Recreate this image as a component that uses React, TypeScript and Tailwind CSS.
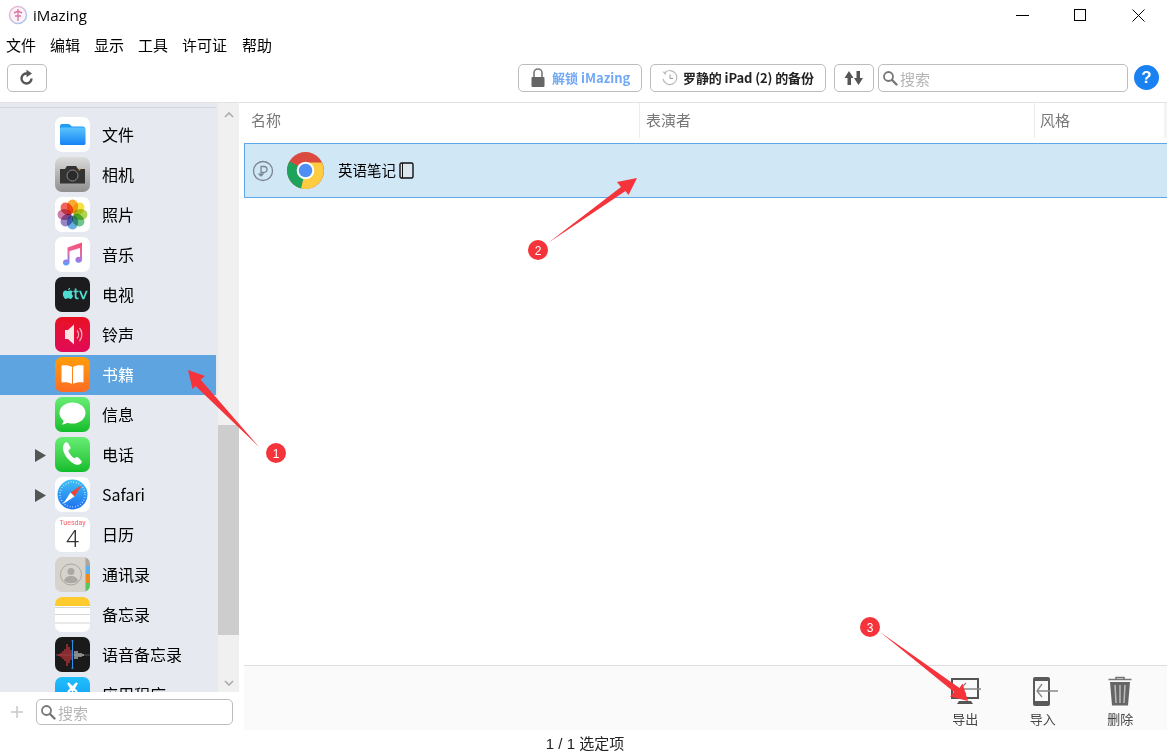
import type { ReactNode } from 'react';

const FONT = "'Noto Sans CJK SC', 'Noto Sans', sans-serif";

function Tile({ children, className = '' }: { children: ReactNode; className?: string }) {
  return <div className={`w-[35px] h-[35px] rounded-[7px] overflow-hidden shrink-0 ${className}`}>{children}</div>;
}

function Svg({ children }: { children: ReactNode }) {
  return (
    <svg width="35" height="35" viewBox="0 0 35 35" className="block">
      {children}
    </svg>
  );
}

const petals = [
  ['#f9a11b', 0], ['#f5de2a', 45], ['#a5cf3d', 90], ['#5fbf7d', 135],
  ['#58a6dc', 180], ['#8f78c0', 225], ['#cc6fa0', 270], ['#f0544c', 315],
] as const;

const icons: Record<string, ReactNode> = {
  files: (
    <Tile className="bg-white">
      <Svg>
        <defs>
          <linearGradient id="fld" x1="0" y1="0" x2="0" y2="1">
            <stop offset="0" stopColor="#5cc4fb" />
            <stop offset="1" stopColor="#1482f5" />
          </linearGradient>
        </defs>
        <path d="M5 9a2 2 0 0 1 2-2h7l3 2.500h11a2 2 0 0 1 2 2V12H5z" fill="#1f9cf3" />
        <rect x="5" y="10.500" width="25.500" height="17.500" rx="1.500" fill="url(#fld)" />
      </Svg>
    </Tile>
  ),
  camera: (
    <Tile className="bg-gradient-to-b from-[#dcdcdc] to-[#8f8f8f]">
      <Svg>
        <path d="M5 12h5l2-3h9l2 3h7v14.500H5z" fill="#333" />
        <circle cx="17.500" cy="18.500" r="5.500" fill="#2a2a2a" stroke="#8d8d8d" strokeWidth="1" />
        <circle cx="24.500" cy="12.500" r="1" fill="#e89a2c" />
      </Svg>
    </Tile>
  ),
  photos: (
    <Tile className="bg-white">
      <Svg>
        {petals.map(([c, a]) => (
          <ellipse key={a} cx="17.500" cy="9.500" rx="5.600" ry="7" fill={c} fillOpacity="0.9" className="mix-blend-multiply" transform={`rotate(${a} 17.500 17.500)`} />
        ))}
      </Svg>
    </Tile>
  ),
  music: (
    <Tile className="bg-white">
      <Svg>
        <defs>
          <linearGradient id="mus" x1="0.5" y1="0" x2="0.4" y2="1">
            <stop offset="0" stopColor="#f9506f" />
            <stop offset="0.45" stopColor="#e66aa8" />
            <stop offset="0.8" stopColor="#8d7df0" />
            <stop offset="1" stopColor="#5ea6f5" />
          </linearGradient>
        </defs>
        <path d="M12.500 10.500 27 5.500v17.200a3.300 3 0 1 1-2-2.700V11l-10.500 3.200v11.300a3.300 3 0 1 1-2-2.700z" fill="url(#mus)" />
      </Svg>
    </Tile>
  ),
  tv: (
    <Tile className="bg-[#1c1c1e]">
      <Svg>
        <path d="M10.500 13.500c1 0 1.500.6 2.600.6 1 0 1.500-.6 2.800-.6.600 0 1.500.3 2 1-1.800 1.100-1.400 3.500.3 4.200-.5 1.300-1.500 3.200-2.700 3.200-.9 0-1.200-.6-2.300-.6s-1.500.6-2.300.6c-1.400 0-3-2.700-3-5 0-2.200 1.400-3.400 2.600-3.400zM13.100 13.300c-.1-1.300 1-2.400 2.100-2.500.1 1.300-1 2.500-2.100 2.500z" fill="#4fdcd0" />
        <path d="M21.500 11.500v2.200h2v1.600h-2v4.300c0 1 .8 1.200 2 1v1.600c-2.300.4-3.800-.3-3.800-2.400v-4.500h-1.200v-1.600h1.200v-2.200zM24 13.700h2l2.400 6.400 2.400-6.400h1.900l-3.400 8.600h-1.900z" fill="#4fdcd0" />
      </Svg>
    </Tile>
  ),
  ring: (
    <Tile className="bg-gradient-to-b from-[#e9101f] to-[#e00a55]">
      <Svg>
        <path d="M10 13h3l6-5.500v20L13 22h-3z" fill="#fbe3e3" />
        <path d="M22 13.500a6 6 0 0 1 0 8M24.500 11a10 10 0 0 1 0 13" fill="none" stroke="#f6b7bd" strokeWidth="1.200" />
      </Svg>
    </Tile>
  ),
  books: (
    <Tile className="bg-gradient-to-b from-[#ff9c05] to-[#fc6c22]">
      <Svg>
        <path d="M17 10c-2.500-1.800-7-2.300-10.500-1.500v17c3.500-.8 8-.2 10.500 1.500zM18 10c2.500-1.800 7-2.300 10.500-1.500v17c-3.500-.8-8-.2-10.500 1.500z" fill="#fff" />
      </Svg>
    </Tile>
  ),
  msg: (
    <Tile className="bg-gradient-to-b from-[#65ee73] to-[#0cbd2a]">
      <Svg>
        <ellipse cx="17.500" cy="16" rx="13" ry="10.500" fill="#fff" />
        <path d="M9 22c0 2.500-1 4.500-2.500 5.500 3 0 5.500-1 7-3z" fill="#fff" />
      </Svg>
    </Tile>
  ),
  phone: (
    <Tile className="bg-gradient-to-b from-[#65ee73] to-[#0cbd2a]">
      <Svg>
        <path d="M10.500 5.500c1-.6 2-.4 2.500.5l2.300 4c.4.800.2 1.600-.5 2.200l-1.500 1.300c.8 2.800 3.200 6 6 7.800l1.800-1.100c.8-.5 1.600-.4 2.200.3l3 3.200c.7.800.6 1.800-.2 2.500-1.600 1.500-3.500 2-5.500 1.300-5.500-2-11-8.500-12.500-14.500-.7-3 .4-6 2.400-7.800z" fill="#fff" />
      </Svg>
    </Tile>
  ),
  safari: (
    <Tile className="bg-white">
      <Svg>
        <defs>
          <linearGradient id="saf" x1="0" y1="0" x2="0" y2="1">
            <stop offset="0" stopColor="#3ec0f5" />
            <stop offset="1" stopColor="#1e6ff0" />
          </linearGradient>
        </defs>
        <circle cx="17.500" cy="17.500" r="15" fill="url(#saf)" />
        <circle cx="17.500" cy="17.500" r="12.500" fill="none" stroke="#d7efff" strokeWidth="1.600" strokeDasharray="0.700 2" />
        <path d="M27 8l-11.500 7.500 4 4z" fill="#f04438" />
        <path d="M8 27l7.500-11.500 4 4z" fill="#fff" />
      </Svg>
    </Tile>
  ),
  cal: (
    <Tile className="bg-white flex flex-col items-center">
      <span className="text-[7px] leading-[9px] mt-[2px] text-[#f4606c]" style={{ fontFamily: 'Roboto' }}>Tuesday</span>
      <span className="text-[24px] leading-[22px] font-light text-[#333]" style={{ fontFamily: 'Roboto' }}>4</span>
    </Tile>
  ),
  contacts: (
    <Tile className="bg-[#d6d3cc]">
      <Svg>
        <rect x="30.500" y="0" width="4.500" height="9" fill="#a9a6a0" />
        <rect x="30.500" y="9" width="4.500" height="8" fill="#5db2ee" />
        <rect x="30.500" y="17" width="4.500" height="9" fill="#f08a1d" />
        <rect x="30.500" y="26" width="4.500" height="9" fill="#5cc65c" />
        <circle cx="16" cy="17.500" r="10.500" fill="none" stroke="#a9a7a1" strokeWidth="1" />
        <circle cx="16" cy="14.500" r="3.500" fill="#aaa8a2" />
        <path d="M9 24c1-4 4-5 7-5s6 1 7 5c-4 3-10 3-14 0z" fill="#aaa8a2" />
      </Svg>
    </Tile>
  ),
  notes: (
    <Tile className="bg-white">
      <Svg>
        <rect width="35" height="9" fill="#fdcb2d" />
        <path d="M0 10.500h35M0 17.500h35M0 26h35" stroke="#d4d4d4" strokeWidth="1" />
      </Svg>
    </Tile>
  ),
  voice: (
    <Tile className="bg-[#1a1a1a]">
      <Svg>
        <path d="M1 18h34" stroke="#666" strokeWidth="0.800" />
        {[4, 6, 8, 10, 12, 14, 16].map((x, i) => (
          <path key={x} d={`M${x} ${18 - [1, 2, 4, 6, 11, 8, 5][i]}v${[1, 2, 4, 6, 11, 8, 5][i] * 2}`} stroke="#c0373c" strokeWidth="1.300" />
        ))}
        {[20, 22, 24, 26, 28].map((x, i) => (
          <path key={x} d={`M${x} ${18 - [4, 4, 2, 2, 1][i]}v${[4, 4, 2, 2, 1][i] * 2}`} stroke="#bdbdbd" strokeWidth="1.300" />
        ))}
        <path d="M17.500 4v27" stroke="#2f8fe8" strokeWidth="1" />
        <circle cx="17.500" cy="4" r="1" fill="#2f8fe8" />
        <circle cx="17.500" cy="31" r="1" fill="#2f8fe8" />
      </Svg>
    </Tile>
  ),
  apps: (
    <Tile className="bg-gradient-to-b from-[#1fc0fb] to-[#1a8cf2]">
      <Svg>
        <path d="M13 6l4.500 7.500L22 6M13 15l9-9M22 15l-9-9" stroke="#fff" strokeWidth="2.200" fill="none" />
      </Svg>
    </Tile>
  ),
};

const items = [
  { key: 'files', label: '文件' },
  { key: 'camera', label: '相机' },
  { key: 'photos', label: '照片' },
  { key: 'music', label: '音乐' },
  { key: 'tv', label: '电视' },
  { key: 'ring', label: '铃声' },
  { key: 'books', label: '书籍', active: true },
  { key: 'msg', label: '信息' },
  { key: 'phone', label: '电话', arrow: true },
  { key: 'safari', label: 'Safari', arrow: true },
  { key: 'cal', label: '日历' },
  { key: 'contacts', label: '通讯录' },
  { key: 'notes', label: '备忘录' },
  { key: 'voice', label: '语音备忘录' },
  { key: 'apps', label: '应用程序' },
];

function SearchGlass({ size = 16 }: { size?: number }) {
  return (
    <svg width={size} height={size} viewBox="0 0 16 16" className="shrink-0">
      <circle cx="6.500" cy="6.500" r="4.500" fill="none" stroke="#777" strokeWidth="1.800" />
      <path d="M10 10l4.500 4.500" stroke="#777" strokeWidth="2.400" strokeLinecap="round" />
    </svg>
  );
}

function ToolButton({ children, className = '' }: { children: ReactNode; className?: string }) {
  return (
    <div className={`h-[28px] rounded-[5px] border border-[#bdbdbd] bg-white flex items-center shrink-0 ${className}`}>
      {children}
    </div>
  );
}

function Badge({ n, x, y }: { n: number; x: number; y: number }) {
  return (
    <g>
      <circle cx={x} cy={y} r="10" fill="#f5333a" />
      <text x={x} y={y + 4.500} textAnchor="middle" fontSize="12" fill="#fff" fontFamily="'Liberation Sans'">{n}</text>
    </g>
  );
}

export default function App() {
  return (
    <div className="w-[1167px] h-[754px] bg-white relative overflow-hidden flex flex-col text-black" style={{ fontFamily: FONT }}>
      {/* title bar */}
      <div className="h-[30px] flex items-center shrink-0">
        <svg width="20" height="20" viewBox="0 0 20 20" className="ml-[8px]">
          <defs>
            <linearGradient id="logo" x1="0" y1="0" x2="1" y2="1">
              <stop offset="0" stopColor="#f6b5c8" />
              <stop offset="1" stopColor="#9fc8f5" />
            </linearGradient>
          </defs>
          <circle cx="10" cy="10" r="8.500" fill="#fdf3f7" stroke="url(#logo)" strokeWidth="1.500" />
          <path d="M10 4v12M6 8l4-2 4 2M7 11h6" stroke="#d77aa8" strokeWidth="1.400" fill="none" />
        </svg>
        <span className="ml-[5px] text-[15px] leading-none" style={{ fontFamily: "'Open Sans', sans-serif" }}>iMazing</span>
        <div className="ml-auto flex">
          <div className="w-[58px] h-[30px] flex items-center justify-center">
            <div className="w-[13px] h-px bg-black" />
          </div>
          <div className="w-[58px] h-[30px] flex items-center justify-center">
            <div className="w-[12px] h-[12px] border border-black" />
          </div>
          <div className="w-[58px] h-[30px] flex items-center justify-center">
            <svg width="13" height="13" viewBox="0 0 13 13">
              <path d="M.5.5l12 12M12.500.5l-12 12" stroke="#000" strokeWidth="1" />
            </svg>
          </div>
        </div>
      </div>

      {/* menu */}
      <div className="h-[28px] flex items-center gap-[14px] pl-[6px] text-[15px] leading-none shrink-0">
        {['文件', '编辑', '显示', '工具', '许可证', '帮助'].map((m) => (
          <span key={m} className="last:ml-px">{m}</span>
        ))}
      </div>

      {/* toolbar */}
      <div className="h-[45px] pt-[6px] flex items-start pl-[7px] pr-[8px] border-b border-[#e2e2e2] shrink-0">
        <ToolButton className="w-[40px] justify-center">
          <svg width="18" height="18" viewBox="0 0 18 18">
            <path d="M13.500 9.500a5 5 0 1 1-4.500-5" fill="none" stroke="#555" strokeWidth="2.400" />
            <path d="M8.500 .8l5.500 3.700-5.500 3.700z" fill="#555" />
          </svg>
        </ToolButton>
        <ToolButton className="w-[124px] ml-auto pl-[11px] gap-[6px]">
          <svg width="16" height="20" viewBox="0 0 16 20">
            <path d="M4 9V5a4 4 0 0 1 8 0v4" fill="none" stroke="#777" strokeWidth="1.600" />
            <rect x="1.500" y="9" width="13" height="10" rx="1" fill="#666" />
          </svg>
          <span className="text-[13px] font-bold text-[#71a9f7] whitespace-nowrap">解锁 iMazing</span>
        </ToolButton>
        <ToolButton className="w-[176px] ml-[8px] pl-[10px] gap-[4px]">
          <svg width="18" height="18" viewBox="0 0 18 18">
            <path d="M3.500 4a7 7 0 1 1-1.500 6" fill="none" stroke="#bbb" strokeWidth="1.200" />
            <path d="M1.500 2.500l3.800.5-1 3.300z" fill="#bbb" />
            <path d="M9 5.500V9.500h3" fill="none" stroke="#999" strokeWidth="1" />
          </svg>
          <span className="text-[13px] font-bold text-[#222] whitespace-nowrap tracking-[-0.1px]">罗静的 iPad (2) 的备份</span>
        </ToolButton>
        <ToolButton className="w-[40px] ml-[8px] justify-center">
          <svg width="20" height="16" viewBox="0 0 20 16">
            <path d="M5 1l4.500 7H7v7H3.500V8H.5zM14.500 15l-4.500-7h2.500V1H16v7h3z" fill="#555" />
          </svg>
        </ToolButton>
        <ToolButton className="w-[250px] ml-[4px] pl-[3px] gap-[2px]">
          <SearchGlass />
          <span className="text-[15px] text-[#b5b5b5] leading-none">搜索</span>
        </ToolButton>
        <div className="w-[25px] h-[25px] ml-[6px] mt-px rounded-full bg-[#1a82f0] text-white text-[17px] font-bold flex items-center justify-center shrink-0" style={{ fontFamily: "'Liberation Sans'" }}>?</div>
      </div>

      <div className="flex-1 min-h-0 flex">
        {/* sidebar */}
        <div className="w-[240px] flex flex-col shrink-0">
          <div className="h-[589px] flex">
            <div className="w-[218px] bg-[#e6e9ef] overflow-hidden pt-[4px]">
              <div className="w-[216px] border-t border-[#d2d5da] mb-[7px]" />
              {items.map((it) => (
                <div key={it.key} className={`w-[216px] h-[40px] flex items-center shrink-0 ${it.active ? 'bg-[#5ea4e0] text-white' : ''}`}>
                  <div className="w-[55px] flex justify-end pr-[9px]">
                    {it.arrow && (
                      <svg width="11" height="13" viewBox="0 0 11 13">
                        <path d="M0 0l11 6.500L0 13z" fill="#555" />
                      </svg>
                    )}
                  </div>
                  <div className="-mt-[1px]">{icons[it.key]}</div>
                  <span className="ml-[12px] -mt-[2px] text-[16px] leading-none whitespace-nowrap">{it.label}</span>
                </div>
              ))}
            </div>
            <div className="w-[21px] bg-[#f0f0f0] flex flex-col items-center">
              <svg width="10" height="6" viewBox="0 0 10 6" className="mt-[9px]">
                <path d="M1 5l4-4 4 4" fill="none" stroke="#aaa" strokeWidth="1.600" />
              </svg>
              <div className="w-full h-[210px] bg-[#cdcdcd] mt-[307px]" />
              <svg width="10" height="6" viewBox="0 0 10 6" className="mt-[45px]">
                <path d="M1 1l4 4 4-4" fill="none" stroke="#aaa" strokeWidth="1.600" />
              </svg>
            </div>
          </div>
          <div className="flex items-center pt-[7px] pl-[10px]">
            <svg width="14" height="14" viewBox="0 0 14 14" className="shrink-0">
              <path d="M7 1v12M1 7h12" stroke="#c8c8c8" strokeWidth="1.500" />
            </svg>
            <div className="w-[197px] h-[26px] ml-[12px] rounded-[5px] border border-[#bdbdbd] flex items-center pl-[3px] gap-[2px]">
              <SearchGlass />
              <span className="text-[15px] text-[#b5b5b5] leading-none">搜索</span>
            </div>
          </div>
        </div>

        {/* main */}
        <div className="flex-1 min-w-0 flex flex-col">
          <div className="h-[35px] flex text-[15px] text-[#777] shrink-0">
            <div className="w-[400px] pl-[11px] flex items-center border-r border-[#ececec]">名称</div>
            <div className="w-[395px] pl-[6px] flex items-center border-r border-[#ececec]">表演者</div>
            <div className="flex-1 pl-[5px] flex items-center border-r-[3px] border-[#f4f4f4]">风格</div>
          </div>
          <div className="ml-[4px] mt-[5px] h-[55px] bg-[#d0e7f6] border border-r-0 border-[#5ea6e8] flex items-center shrink-0">
            <svg width="22" height="22" viewBox="0 0 22 22" className="ml-[7px]">
              <circle cx="11" cy="11" r="9.500" fill="none" stroke="#7c8690" strokeWidth="1.300" />
              <path d="M9 15V6.500h3a3 3 0 0 1 0 6H9M9 16l-2.500-2.500M9 16l2.500-2.500" fill="none" stroke="#7c8690" strokeWidth="1.300" />
            </svg>
            <svg width="37" height="37" viewBox="0 0 37 37" className="ml-[13px]">
              <circle cx="18.500" cy="18.500" r="18.500" fill="#db4a3f" />
              <path d="M18.500 18.500 2.500 9.300A18.500 18.500 0 0 0 14 36.500z" fill="#1ea35d" />
              <path d="M18.500 18.500 14 36.500A18.500 18.500 0 0 0 35 10.500H18.500z" fill="#fdcc40" />
              <circle cx="18.500" cy="18.500" r="8.800" fill="#fff" />
              <circle cx="18.500" cy="18.500" r="6.800" fill="#4e8ff5" />
            </svg>
            <span className="ml-[14px] text-[14.500px] leading-none">英语笔记</span>
            <svg width="15" height="17" viewBox="0 0 15 17" className="ml-[3px]">
              <rect x="1" y="1" width="13" height="15" rx="1.500" fill="#dbe6ee" stroke="#111" strokeWidth="1.400" />
              <path d="M3.500 1v15" stroke="#111" strokeWidth="1" />
            </svg>
          </div>
          <div className="flex-1" />
          <div className="ml-[4px] h-[65px] bg-[#fafafa] border-t border-[#dedede] flex justify-end pr-[8px] shrink-0">
            {[
              {
                label: '导出',
                icon: (
                  <svg width="32" height="30" viewBox="0 0 32 30">
                    <rect x="3" y="3" width="26" height="19" fill="none" stroke="#555" strokeWidth="2" />
                    <path d="M10 25h12l2 3H8z" fill="#555" />
                    <path d="M17 7l-6 6 6 5M12 13h20" fill="none" stroke="#888" strokeWidth="1.300" />
                  </svg>
                ),
              },
              {
                label: '导入',
                icon: (
                  <svg width="32" height="30" viewBox="0 0 32 30">
                    <rect x="6" y="1" width="17" height="29" rx="2" fill="#5a5a5a" />
                    <rect x="8" y="5" width="13" height="20" fill="#fafafa" />
                    <path d="M15 8l-5 7 5 6M11 15h20" fill="none" stroke="#888" strokeWidth="1.300" />
                  </svg>
                ),
              },
              {
                label: '删除',
                icon: (
                  <svg width="32" height="30" viewBox="0 0 32 30">
                    <path d="M12 3V1.500h8V3M4.500 3.500h23" fill="none" stroke="#777" strokeWidth="1.600" />
                    <path d="M6 6h20l-2 23.500H8z" fill="#666" />
                    <path d="M11 9l1 18M16 9v18M21 9l-1 18" stroke="#bbb" strokeWidth="1.500" />
                  </svg>
                ),
              },
            ].map((b) => (
              <div key={b.label} className="w-[77.500px] flex flex-col items-center pt-[10px]">
                {b.icon}
                <span className="text-[13px] leading-none text-[#444] mt-[6px]">{b.label}</span>
              </div>
            ))}
          </div>
        </div>
      </div>

      <div className="h-[24px] pt-[3px] flex items-center justify-center text-[15px] leading-none text-[#222] shrink-0 pl-[3px]" style={{ fontFamily: "'Liberation Sans', 'Noto Sans CJK SC', sans-serif" }}>1 / 1 选定项</div>

      {/* red callouts drawn over the screenshot */}
      <svg width="1167" height="754" viewBox="0 0 1167 754" className="absolute inset-0 pointer-events-none">
        <path d="M188 370L205 376L200.500 379.500L259 447L195.500 386L192.500 389Z" fill="#f5333a" />
        <Badge n={1} x={276} y={453} />
        <path d="M637 178L617 182L621 187L548 243L625.500 191L628.500 195Z" fill="#f5333a" />
        <Badge n={2} x={538} y={250} />
        <path d="M968 701L950 696.500L954 692L880 632L959.500 688L962.500 683.500Z" fill="#f5333a" />
        <Badge n={3} x={870} y={627} />
      </svg>
    </div>
  );
}
